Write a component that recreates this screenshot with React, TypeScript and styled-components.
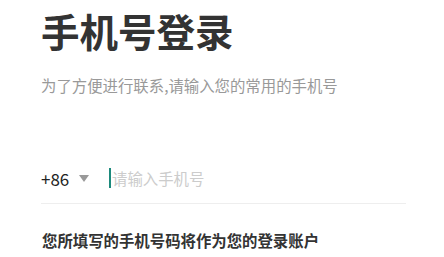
import React from "react";
import styled, { createGlobalStyle } from "styled-components";

const Global = createGlobalStyle`
  html, body { margin: 0; padding: 0; background: #fff; }
  body { font-family: "Noto Sans CJK SC", "Noto Sans", sans-serif; }
`;

const Page = styled.div`
  padding: 2px 38px 0 41px;
  display: flex;
  flex-direction: column;
`;

const Title = styled.h1`
  margin: 0;
  font-size: 38.5px;
  line-height: 56px;
  font-weight: 700;
  color: #333;
`;

const Subtitle = styled.p`
  margin: 16px 0 0;
  font-size: 15.4px;
  line-height: 22px;
  color: #999;
`;

const PhoneRow = styled.div`
  margin-top: 62px;
  display: flex;
  align-items: center;
  height: 40px;
  border-bottom: 1px solid #eee;
  padding-bottom: 5px;
`;

const Code = styled.div`
  display: flex;
  align-items: center;
  gap: 10px;
  font-size: 17px;
  color: #222;
  width: 68px;
`;

const Caret = styled.span`
  width: 0;
  height: 0;
  border-left: 5.5px solid transparent;
  border-right: 5.5px solid transparent;
  border-top: 7px solid #999;
`;

const InputWrap = styled.div`
  display: flex;
  align-items: center;
  gap: 1px;
`;

const Cursor = styled.span`
  width: 2px;
  height: 20px;
  background: #1d8a7c;
`;

const Placeholder = styled.span`
  font-size: 15.4px;
  color: #ccc;
`;

const Note = styled.p`
  margin: 25px 0 0 1px;
  font-size: 15.4px;
  line-height: 22px;
  font-weight: 700;
  color: #333;
`;

export default function App() {
  return (
    <>
      <Global />
      <Page>
        <Title>手机号登录</Title>
        <Subtitle>为了方便进行联系,请输入您的常用的手机号</Subtitle>
        <PhoneRow>
          <Code>
            +86 <Caret />
          </Code>
          <InputWrap>
            <Cursor />
            <Placeholder>请输入手机号</Placeholder>
          </InputWrap>
        </PhoneRow>
        <Note>您所填写的手机号码将作为您的登录账户</Note>
      </Page>
    </>
  );
}
